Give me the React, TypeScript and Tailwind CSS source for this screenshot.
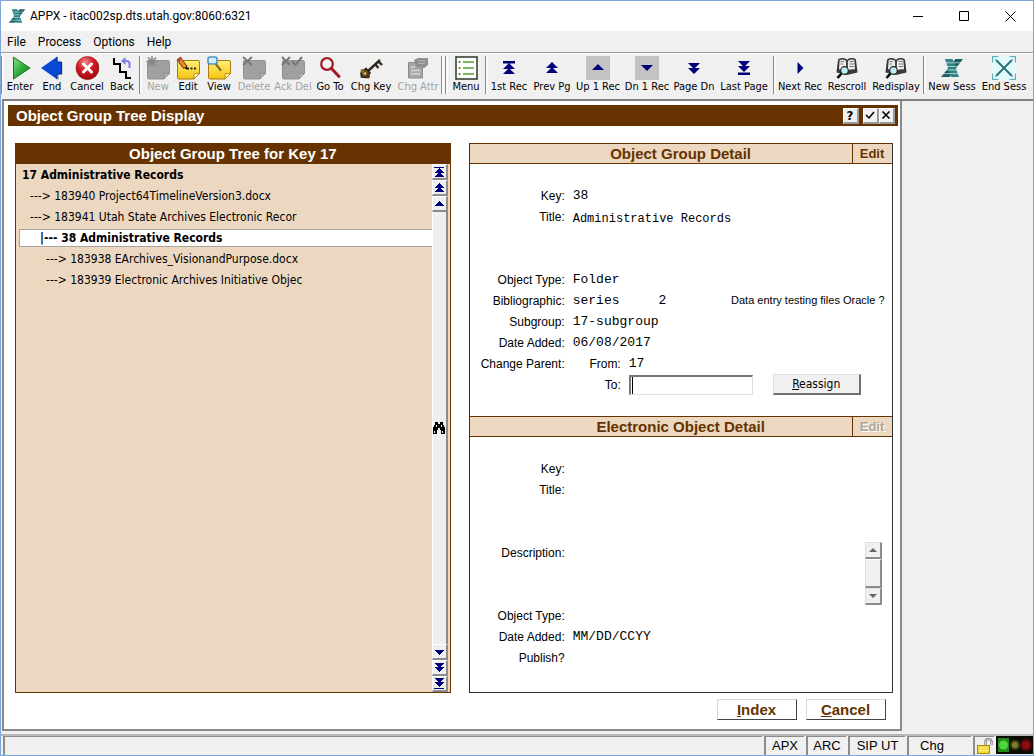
import React from "react";

const uiFont = "font-['DejaVu_Sans_Condensed','DejaVu_Sans',sans-serif]";
const arial = "font-['Liberation_Sans',sans-serif]";
const mono = "font-['Liberation_Mono',monospace]";

/* ---------- icons ---------- */

function Svg({ children, label }: { children: React.ReactNode; label?: string }) {
  return (
    <svg viewBox="0 0 24 24" className="size-6 shrink-0" aria-hidden={!label} aria-label={label}>
      {children}
    </svg>
  );
}

const EnterIcon = () => (
  <Svg>
    <defs>
      <linearGradient id="enterFill" x1="0" y1="0" x2="1" y2="1">
        <stop offset="0" stopColor="#8be08b" />
        <stop offset="0.5" stopColor="#2fae3a" />
        <stop offset="1" stopColor="#0b7a1c" />
      </linearGradient>
    </defs>
    <path d="M5.500 1.200 22 12 5.500 23Z" fill="url(#enterFill)" stroke="#1c6e26" strokeLinejoin="round" />
  </Svg>
);

const EndIcon = () => (
  <Svg>
    <path d="M1.500 12 17 1v5.500h4.500v11.500H18V23.500Z" fill="#8f8f9c" opacity=".6" transform="translate(1 .5)" />
    <path d="M1 12 17 .8V6h4.500v12H17v5.200Z" fill="#0a49d6" />
    <path d="M17 .8V6h4.500v12H17v5.200" fill="none" stroke="#062a86" />
  </Svg>
);

const CancelIcon = () => (
  <Svg>
    <defs>
      <radialGradient id="cancelFill" cx=".4" cy=".25" r=".8">
        <stop offset="0" stopColor="#f08a8a" />
        <stop offset="0.45" stopColor="#d41a24" />
        <stop offset="1" stopColor="#9a0810" />
      </radialGradient>
    </defs>
    <circle cx="12.500" cy="12" r="11.500" fill="url(#cancelFill)" stroke="#8d0f16" strokeWidth=".6" />
    <path d="m8.500 8 8 8m0-8-8 8" stroke="#fff" strokeWidth="3" strokeLinecap="round" />
  </Svg>
);

const BackIcon = () => (
  <Svg>
    <path d="M3 3h6v7h6v6.500M4 2.500v5" fill="none" stroke="none" />
    <path d="M4 2v6h6v8h6v6h5" fill="none" stroke="#000" strokeWidth="2" />
    <path d="M19.500 12V7.500q0-2.500-3-2.500h-2" fill="none" stroke="#7c7cf0" strokeWidth="2" />
    <path d="M15.500 1v8L11 5Z" fill="#7c7cf0" />
  </Svg>
);

function NoteShape({ disabled, children }: { disabled?: boolean; children?: React.ReactNode }) {
  return (
    <Svg>
      <defs>
        <linearGradient id="noteFill" x1="0" y1="0" x2="0" y2="1">
          <stop offset="0" stopColor="#fff27a" />
          <stop offset="1" stopColor="#f7c20e" />
        </linearGradient>
      </defs>
      <path
        d="M2 4.500h20q1.500 0 1.500 1.500v11.500L18 23H3q-1.500 0-1.500-1.500V6q0-1.500.5-1.500Z"
        fill={disabled ? "#a0a0a0" : "url(#noteFill)"}
        stroke={disabled ? "#929292" : "#a8760a"}
      />
      <path d="M23.500 17.500H19q-1 0-1 1V23Z" fill={disabled ? "#b4b4b4" : "#fff9b0"} stroke={disabled ? "#8c8c8c" : "#a8760a"} strokeWidth=".8" />
      {children}
    </Svg>
  );
}

const NewIcon = () => (
  <NoteShape disabled>
    <path d="M6 0v11M.5 5.500h11M2 1.500l8 8m0-8-8 8" stroke="#868686" strokeWidth="1.600" />
  </NoteShape>
);

const EditIcon = () => (
  <NoteShape>
    <path d="m2.500 2.500 7 9" stroke="#7b3c10" strokeWidth="5" />
    <path d="m3.500 3.500 6 8" stroke="#ef8b2c" strokeWidth="3" />
    <path d="M.8 3.500 4.500.5l2 2.500-4 3Z" fill="#b04a3c" />
    <path d="m8 12 3-2 .5 4Z" fill="#222" />
    <path d="M11 12.500h2m1.500 0h2m1.500 0h2" stroke="#222" strokeWidth="2" />
  </NoteShape>
);

const ViewIcon = () => (
  <NoteShape>
    <path d="m8 7 5.500 7" stroke="#8a6a20" strokeWidth="2.200" strokeLinecap="round" />
    <rect x="1" y="1" width="9" height="7" rx="2" fill="#cdeeff" stroke="#4e93c6" strokeWidth="1.600" />
  </NoteShape>
);

const DeleteIcon = () => (
  <NoteShape disabled>
    <path d="m1 1 9 8m0-8L1 9" stroke="#777" strokeWidth="1.800" />
  </NoteShape>
);

const AckDelIcon = () => (
  <NoteShape disabled>
    <path d="m1 1 8 8m0-8L1 9m10-4 3.500 4L21 1" stroke="#777" strokeWidth="2" fill="none" />
  </NoteShape>
);

const GoToIcon = () => (
  <Svg>
    <circle cx="9" cy="8" r="5.800" fill="#f7f3f3" stroke="#a11a22" strokeWidth="2.200" />
    <path d="m13.500 12.500 7.500 8" stroke="#a11a22" strokeWidth="3" strokeLinecap="round" />
  </Svg>
);

const KeyIcon = () => (
  <Svg>
    <path d="M8 16 21 4" stroke="#33261a" strokeWidth="2.400" />
    <path d="m16 8 3.500 4m-.5-7 4 4" stroke="#33261a" strokeWidth="2.400" />
    <path d="M7 12.500 11 17l-4 4.500L2.500 21l-.5-4Z" fill="#6b4a1c" stroke="#2c1f12" strokeWidth="1.600" />
    <circle cx="6" cy="17.500" r="1.300" fill="#e5c27a" />
    <circle cx="3.500" cy="15" r="2" fill="#8a6428" />
    <circle cx="9" cy="20.500" r="2" fill="#4b3315" />
  </Svg>
);

const AttrIcon = () => (
  <Svg>
    <path d="M2.500 6.500h14V22h-14Z" fill="#a8a8a8" stroke="#8c8c8c" />
    <path d="M8 4 12 2h10v7l-4 3-8-1Z" fill="#8f8f8f" />
    <path d="M5 11h4m-4 3.500h9M5 18h9" stroke="#d6d6d6" strokeWidth="1.400" />
    <path d="M12 5h8m-8 2.500h7" stroke="#b4b4b4" />
  </Svg>
);

const MenuIcon = () => (
  <Svg>
    <rect x="2" y="1" width="21" height="22" fill="#fff" stroke="#3c4038" strokeWidth="1.600" />
    <path d="M9 6h11M9 12h11M9 18h11" stroke="#4fa22b" strokeWidth="1.500" />
    <path d="M4.500 6h2m-2 6h2m-2 6h2" stroke="#4fa22b" strokeWidth="2" />
  </Svg>
);

const up = (x: number, y: number, w: number, h: number) => `M${x} ${y} ${x + w} ${y + h}H${x - w}Z`;
const down = (x: number, y: number, w: number, h: number) => `M${x} ${y + h} ${x + w} ${y}H${x - w}Z`;

const FirstIcon = () => (
  <Svg>
    <path d={`M6 5h12v2.500H6Z ${up(12, 7, 6, 6)} ${up(12, 12, 6, 6)}`} fill="#00007b" />
  </Svg>
);
const PrevPageIcon = () => (
  <Svg>
    <path d={`${up(12, 6, 6, 6)} ${up(12, 11, 6, 6)}`} fill="#00007b" />
  </Svg>
);
const UpIcon = () => (
  <Svg>
    <path d="M0 0h24v24H0Z" fill="#c3c3c3" />
    <path d={up(12, 8, 6, 6)} fill="#00007b" />
  </Svg>
);
const DownIcon = () => (
  <Svg>
    <path d="M0 0h24v24H0Z" fill="#c3c3c3" />
    <path d={down(12, 9, 6, 6)} fill="#00007b" />
  </Svg>
);
const NextPageIcon = () => (
  <Svg>
    <path d={`${down(12, 7, 6, 6)} ${down(12, 12, 6, 6)}`} fill="#00007b" />
  </Svg>
);
const LastIcon = () => (
  <Svg>
    <path d={`M6 16.500h12V19H6Z ${down(12, 5, 6, 6)} ${down(12, 10, 6, 6)}`} fill="#00007b" />
  </Svg>
);
const NextIcon = () => (
  <Svg>
    <path d="M9.500 6v12l6-6Z" fill="#00007b" />
  </Svg>
);

const BookIcon = () => (
  <Svg>
    <path d="M3 4 1.500 16.500 12 19 22.500 16.500 21 4 12 6Z" fill="#3a3a3a" />
    <path d="M4 3.500q5-2 8 1.200Q15 1.500 20 3.500l.8 10.800Q15 13 12 16 9 13 3.200 14.300Z" fill="#ececec" stroke="#333" strokeWidth="1.400" />
    <path d="M12 5v10" stroke="#222" strokeWidth="1.600" />
    <path d="M14.500 5.500h4m-4 2.500h4.500m-4.500 2.500h4.500M5.500 5.500H9M5.500 8H8" stroke="#777" />
    <circle cx="9.500" cy="14.500" r="3.800" fill="#bdeef2" stroke="#222" strokeWidth="1.200" />
    <path d="m6.500 17.500-4 4.500" stroke="#000" strokeWidth="2.600" />
  </Svg>
);

function XLogo({ className }: { className: string }) {
  return (
    <svg viewBox="0 0 24 24" className={className} aria-hidden>
      <path d="M15.500 3h7.500L9.500 21H1Z" fill="#1d5f63" />
      <path d="M5 3h7.500l6.500 18h-8Z" fill="#2d8585" />
      <path d="M4 6.800h18M4 10.400h17M4 14h17M2 17.600h18" stroke="#eaf2f2" strokeWidth=".7" />
    </svg>
  );
}

const EndSessIcon = () => (
  <Svg>
    <path d="M0 0h24v24H0Z" fill="#e4fbfc" />
    <path d="M0 0h7L0 7Zm24 0h-7l7 7ZM0 24h7l-7-7Zm24 0h-7l7-7Z" fill="#5ab3c0" />
    <path d="m4 4 16 16" stroke="#287178" strokeWidth="2" />
    <path d="M20 4 4 20" stroke="#287178" strokeWidth="2" />
    <path d="M2 6V2h4m12 0h4v4m0 12v4h-4M6 22H2v-4" stroke="#fff" strokeWidth="1.500" fill="none" />
  </Svg>
);

/* ---------- toolbar ---------- */

type Tool = { label: string; width: string; icon: React.ReactNode; disabled?: boolean };

const toolGroups: Tool[][] = [
  [
    { label: "Enter", width: "w-8", icon: <EnterIcon /> },
    { label: "End", width: "w-8", icon: <EndIcon /> },
    { label: "Cancel", width: "w-[38px]", icon: <CancelIcon /> },
    { label: "Back", width: "w-8", icon: <BackIcon /> },
  ],
  [
    { label: "New", width: "w-8", icon: <NewIcon />, disabled: true },
    { label: "Edit", width: "w-7", icon: <EditIcon /> },
    { label: "View", width: "w-[34px]", icon: <ViewIcon /> },
    { label: "Delete", width: "w-9", icon: <DeleteIcon />, disabled: true },
    { label: "Ack Del", width: "w-[42px]", icon: <AckDelIcon />, disabled: true },
    { label: "Go To", width: "w-8", icon: <GoToIcon /> },
    { label: "Chg Key", width: "w-[50px]", icon: <KeyIcon /> },
    { label: "Chg Attr", width: "w-11", icon: <AttrIcon />, disabled: true },
  ],
  [],
  [{ label: "Menu", width: "w-9", icon: <MenuIcon /> }],
  [
    { label: "1st Rec", width: "w-[42px]", icon: <FirstIcon /> },
    { label: "Prev Pg", width: "w-11", icon: <PrevPageIcon /> },
    { label: "Up 1 Rec", width: "w-12", icon: <UpIcon /> },
    { label: "Dn 1 Rec", width: "w-[50px]", icon: <DownIcon /> },
    { label: "Page Dn", width: "w-11", icon: <NextPageIcon /> },
    { label: "Last Page", width: "w-14", icon: <LastIcon /> },
  ],
  [
    { label: "Next Rec", width: "w-12", icon: <NextIcon /> },
    { label: "Rescroll", width: "w-[46px]", icon: <BookIcon /> },
    { label: "Redisplay", width: "w-[52px]", icon: <BookIcon /> },
  ],
  [
    { label: "New Sess", width: "w-[52px]", icon: <XLogo className="size-6" /> },
    { label: "End Sess", width: "w-[52px]", icon: <EndSessIcon /> },
  ],
];

function Toolbar() {
  return (
    <div role="toolbar" aria-label="Main" className="flex h-[47px] items-start gap-px overflow-hidden border-t border-[#9a9a9a] pt-[3px] shadow-[inset_0_1px_0_#fff]">
      {toolGroups.map((group, i) => (
        <div key={i} className="flex">
          <span className="h-[38px] w-[3px] shrink-0 border-l border-[#8a8a8a] bg-white/60" />
          {group.map((t) => (
            <button key={t.label} type="button" disabled={t.disabled} className={`${t.width} flex flex-col items-center disabled:text-[#a3a3a3]`}>
              {t.icon}
              <span className="text-[11px] leading-[14px] whitespace-nowrap">{t.label}</span>
            </button>
          ))}
        </div>
      ))}
    </div>
  );
}

/* ---------- tree ---------- */

const treeRows = [
  { text: "17 Administrative Records", pad: "pl-1.5", bold: true },
  { text: "---> 183940 Project64TimelineVersion3.docx", pad: "pl-3.5" },
  { text: "---> 183941 Utah State Archives Electronic Recor", pad: "pl-3.5" },
  { text: "|--- 38 Administrative Records", pad: "pl-5", bold: true, selected: true },
  { text: "---> 183938 EArchives_VisionandPurpose.docx", pad: "pl-[30px]" },
  { text: "---> 183939 Electronic Archives Initiative Objec", pad: "pl-[30px]" },
];

function ScrollButton({ label, d }: { label: string; d: string }) {
  return (
    <button type="button" aria-label={label} className="flex h-4 w-4 items-center justify-center border-t border-l border-r-2 border-b-2 border-t-white border-l-white border-r-[#8c8c8c] border-b-[#8c8c8c] bg-[#efefef]">
      <svg viewBox="0 0 12 12" className="size-3 shrink-0" shapeRendering="crispEdges">
        <path d={d} fill="#00007b" />
      </svg>
    </button>
  );
}

function TreePanel() {
  return (
    <section className="flex min-w-0 flex-[436] flex-col border border-[#663300] bg-[#ecd8c0]">
      <h2 className={`${arial} h-5 bg-[#663300] text-center text-[15px] leading-5 font-bold text-white`}>Object Group Tree for Key 17</h2>
      <div className="flex flex-1">
        <ul className="min-w-0 flex-1">
          {treeRows.map((r) => (
            <li key={r.text} className="flex h-[21px] items-center">
              <button
                type="button"
                className={`${r.pad} h-[18px] w-full truncate text-left text-[12px] leading-4 ${r.bold ? "font-bold" : ""} ${
                  r.selected ? "ml-[3px] border border-r-0 border-[#a8a49e] bg-white" : ""
                }`}
              >
                {r.text}
              </button>
            </li>
          ))}
        </ul>
        <div className="mr-0.5 flex w-4 flex-col">
          <ScrollButton label="First record" d={`M1 1h10v1H1Z ${up(6, 2, 5, 5)} ${up(6, 6, 5, 5)}`} />
          <ScrollButton label="Previous page" d={`${up(6, 1, 5, 5)} ${up(6, 5, 5, 5)}`} />
          <ScrollButton label="Up one record" d={up(6, 3, 5, 5)} />
          <div className="flex flex-1 items-center justify-center border-r-2 border-l border-r-[#8c8c8c] border-l-white bg-[#efefef]">
            <svg viewBox="0 0 12 12" className="size-3 shrink-0" shapeRendering="crispEdges" aria-label="Find">
              <path d="M2 0h3v2h2V0h3v3h1v2h1v7H8V8H7V6H5v2H4v4H0V5h1V3h1Z" fill="#000" />
              <path d="M1 9h1v2H1Zm8 0h1v2H9ZM3 3h1v2H3Zm5 0h1v2H8Z" fill="#efefef" />
            </svg>
          </div>
          <ScrollButton label="Down one record" d={down(6, 4, 5, 5)} />
          <ScrollButton label="Next page" d={`${down(6, 1, 5, 5)} ${down(6, 5, 5, 5)}`} />
          <ScrollButton label="Last record" d={`M1 10h10v1H1Z ${down(6, 0, 5, 5)} ${down(6, 4, 5, 5)}`} />
        </div>
      </div>
    </section>
  );
}

/* ---------- details ---------- */

function DetailHeader({ title, disabled }: { title: string; disabled?: boolean }) {
  return (
    <div className={`${arial} flex h-[21px] border-y border-[#663300] bg-[#ecd8c0] font-bold text-[#663300]`}>
      <h2 className="flex-1 pl-10 text-center text-[15px] leading-5">{title}</h2>
      <button type="button" disabled={disabled} className="w-10 border-l border-[#663300] text-[13px] disabled:text-[#aaa6a0] disabled:[text-shadow:1px_1px_0_#fff]">
        Edit
      </button>
    </div>
  );
}

function Row({ label, children }: { label?: string; children?: React.ReactNode }) {
  return (
    <div className="flex h-[21px] items-center gap-2">
      <span className={`${arial} w-[95px] shrink-0 text-right text-[12px]`}>{label}</span>
      {children}
    </div>
  );
}

const Value = ({ children }: { children: React.ReactNode }) => <span className={`${mono} text-[13px] whitespace-pre`}>{children}</span>;

function GrayArrow({ d, label }: { d: string; label: string }) {
  return (
    <button type="button" aria-label={label} className="flex h-[17px] items-center justify-center border-r-2 border-b-2 border-t border-l border-t-[#e0e0e0] border-l-[#e0e0e0] border-r-[#8c8c8c] border-b-[#8c8c8c] bg-[#f0f0f0]">
      <svg viewBox="0 0 8 8" className="size-2">
        <path d={d} fill="#666" />
      </svg>
    </button>
  );
}

function DetailPanel() {
  return (
    <section className="flex min-w-0 flex-[424] flex-col border-x border-b border-[#333]">
      <DetailHeader title="Object Group Detail" />
      <Row />
      <Row label="Key:">
        <Value>38</Value>
      </Row>
      <Row label="Title:">
        <span className={`${mono} pt-1 text-[12px]`}>Administrative Records</span>
      </Row>
      <Row />
      <Row />
      <Row label="Object Type:">
        <Value>Folder</Value>
      </Row>
      <Row label="Bibliographic:">
        <Value>{"series     2"}</Value>
        <span className={`${arial} mr-[7px] flex-1 text-right text-[11px] whitespace-nowrap`}>Data entry testing files Oracle ?</span>
      </Row>
      <Row label="Subgroup:">
        <Value>17-subgroup</Value>
      </Row>
      <Row label="Date Added:">
        <Value>06/08/2017</Value>
      </Row>
      <Row label="Change Parent:">
        <span className={`${arial} w-12 text-right text-[12px]`}>From:</span>
        <Value>17</Value>
      </Row>
      <Row>
        <label htmlFor="to" className={`${arial} w-12 text-right text-[12px]`}>
          To:
        </label>
        <div className="relative flex">
          <input
            id="to"
            className={`${mono} h-5 w-[124px] border-t-2 border-r border-b border-l-2 border-t-[#777] border-r-[#ddd] border-b-[#ddd] border-l-[#777] bg-white pl-px text-[13px] caret-transparent outline-none`}
          />
          <span aria-hidden className="absolute top-0.5 left-[3px] h-[17px] w-px bg-black" />
        </div>
        <button type="button" className="ml-3 h-[21px] w-[88px] border-t border-r-2 border-b-2 border-l border-t-[#e0e0e0] border-r-[#707070] border-b-[#707070] border-l-[#e0e0e0] bg-[#f0f0f0] text-[12px]">
          <u>R</u>eassign
        </button>
      </Row>
      <Row />
      <DetailHeader title="Electronic Object Detail" disabled />
      <Row />
      <Row label="Key:" />
      <Row label="Title:" />
      <Row />
      <Row />
      <div className="flex h-[63px] gap-2">
        <label htmlFor="description" className={`${arial} w-[95px] shrink-0 text-right text-[12px] leading-[22px]`}>
          Description:
        </label>
        <textarea id="description" className="min-w-0 flex-1 resize-none outline-none" />
        <div className="mr-2.5 flex w-[17px] flex-col">
          <GrayArrow label="Scroll up" d="M4 2 8 6H0Z" />
          <div className="flex-1 border-t border-r-2 border-b-2 border-l border-t-white border-r-[#8c8c8c] border-b-[#8c8c8c] border-l-[#e0e0e0] bg-[#f0f0f0]" />
          <GrayArrow label="Scroll down" d="M4 6 8 2H0Z" />
        </div>
      </div>
      <Row label="Object Type:" />
      <Row label="Date Added:">
        <Value>MM/DD/CCYY</Value>
      </Row>
      <Row label="Publish?" />
    </section>
  );
}

function CaptionButton({ label, children }: { label: string; children: React.ReactNode }) {
  return (
    <button type="button" aria-label={label} className="flex size-4 items-center justify-center border-t border-r-2 border-b-2 border-l border-t-white border-r-[#999] border-b-[#999] border-l-white bg-[#f0f0f0] text-[13px] leading-none font-bold">
      {children}
    </button>
  );
}

function ActionButton({ first, rest }: { first: string; rest: string }) {
  return (
    <button type="button" className={`${arial} h-[21px] w-20 border border-t-[#d8d8d8] border-r-[#444] border-b-[#444] border-l-[#d8d8d8] bg-white text-[15px] leading-[18px] font-bold text-[#663300]`}>
      <u>{first}</u>
      {rest}
    </button>
  );
}

function StatusCell({ width, children }: { width: string; children?: React.ReactNode }) {
  return <div className={`${width} flex items-center justify-center border-t border-l-2 border-[#8c8c8c]`}>{children}</div>;
}

export default function App() {
  return (
    <div className={`${uiFont} flex min-h-screen flex-col border border-[#7fa6d6] bg-[#f0f0f0] text-black`}>
      <header className="flex h-[30px] items-center bg-white pl-[7px] font-['Roboto',sans-serif] text-[12px]">
        <XLogo className="size-[18px]" />
        <h1 className="ml-1 flex-1">APPX - itac002sp.dts.utah.gov:8060:6321</h1>
        <div className="flex">
          <button type="button" aria-label="Minimize" className="flex w-[46px] justify-center">
            <svg viewBox="0 0 11 11" className="size-[11px]">
              <path d="M0 5.500h10" stroke="#000" />
            </svg>
          </button>
          <button type="button" aria-label="Maximize" className="flex w-[46px] justify-center">
            <svg viewBox="0 0 11 11" className="size-[11px]">
              <path d="M.5.500h9v9h-9Z" fill="none" stroke="#000" />
            </svg>
          </button>
          <button type="button" aria-label="Close" className="flex w-[46px] justify-center">
            <svg viewBox="0 0 11 11" className="size-[11px]">
              <path d="m.5.500 10 10m0-10-10 10" stroke="#000" />
            </svg>
          </button>
        </div>
      </header>

      <nav aria-label="Menu bar" className="flex h-[21px] items-center gap-3 pl-1.5 font-['Roboto',sans-serif] text-[12px]">
        <button type="button">File</button>
        <button type="button">Process</button>
        <button type="button">Options</button>
        <button type="button">Help</button>
      </nav>

      <Toolbar />

      <main className="ml-px flex flex-1 border-t-2 border-[#808080]">
        <div className="flex min-w-0 flex-[899] flex-col border-r-2 border-b-2 border-l-2 border-[#8a8a8a] bg-white">
          <div className="mt-1 mr-0.5 ml-1 flex h-[21px] items-center bg-[#663300] pr-[3px] pl-2">
            <h2 className={`${arial} flex-1 text-[15px] leading-5 font-bold text-white`}>Object Group Tree Display</h2>
            <CaptionButton label="Help">?</CaptionButton>
            <span className="w-1" />
            <CaptionButton label="Accept">
              <svg viewBox="0 0 10 10" className="size-2.5 shrink-0">
                <path d="m1 5 3 3 5-6" stroke="#000" strokeWidth="1.500" fill="none" />
              </svg>
            </CaptionButton>
            <CaptionButton label="Close">
              <svg viewBox="0 0 10 10" className="size-2.5 shrink-0">
                <path d="m1.500 1.500 7 7m0-7-7 7" stroke="#000" strokeWidth="1.600" />
              </svg>
            </CaptionButton>
          </div>
          <div className="mt-[17px] mr-[7px] ml-[11px] flex flex-1 gap-[18px]">
            <TreePanel />
            <DetailPanel />
          </div>
          <div className="mt-1.5 mr-3.5 mb-[9px] flex justify-end gap-[9px]">
            <ActionButton first="I" rest="ndex" />
            <ActionButton first="C" rest="ancel" />
          </div>
        </div>
        <div className="flex-[132]" />
      </main>

      <footer className={`${arial} mt-[3px] flex h-[21px] gap-0.5 border-t-2 border-[#b8b8b8] pl-0.5 text-[13px]`}>
        <StatusCell width="flex-1" />
        <StatusCell width="w-10">APX</StatusCell>
        <StatusCell width="w-10">ARC</StatusCell>
        <StatusCell width="w-[57px]">SIP UT</StatusCell>
        <StatusCell width="w-16 pr-4">Chg</StatusCell>
        <StatusCell width="w-[21px]">
          <svg viewBox="0 0 18 18" className="size-[18px] shrink-0" aria-label="Unlocked">
            <path d="M9.500 9V5q0-3 3-3t3 3v3" fill="none" stroke="#777" strokeWidth="2.200" />
            <path d="M9.500 9V5q0-3 3-3t3 3v3" fill="none" stroke="#ddd" strokeWidth=".8" />
            <rect x="1.500" y="8.500" width="12" height="8" fill="#f4d838" stroke="#a88a10" />
            <path d="M3 11h9m-9 2.500h9" stroke="#fff08a" />
          </svg>
        </StatusCell>
        <svg viewBox="0 0 37 18" className="h-[18px] w-[37px]" aria-label="Activity lights">
          <path d="M0 0h37v18H0Z" fill="#0c0c04" />
          <rect x="2" y="2" width="11" height="14" fill="#238a1c" />
          <circle cx="7.500" cy="9" r="4.500" fill="#4fd63a" />
          <circle cx="19" cy="9" r="5" fill="#3d4210" />
          <circle cx="19" cy="9" r="3" fill="#77802a" />
          <circle cx="30" cy="9" r="6" fill="#5c0808" />
          <circle cx="30" cy="9" r="3.500" fill="#8d1010" />
        </svg>
      </footer>
    </div>
  );
}
